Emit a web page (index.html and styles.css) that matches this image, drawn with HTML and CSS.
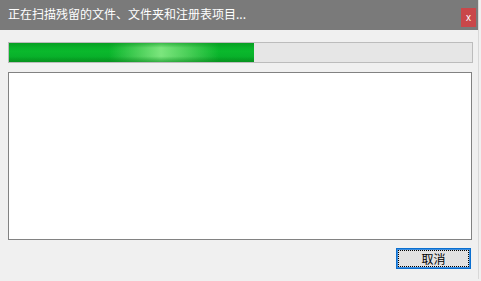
FILE: index.html
```html
<!DOCTYPE html>
<html>
<head>
<meta charset="utf-8">
<link rel="stylesheet" href="styles.css">
</head>
<body>
<div class="window">
  <div class="titlebar">
    <span class="title">正在扫描残留的文件、文件夹和注册表项目...</span>
    <span class="close">x</span>
  </div>
  <div class="content">
    <div class="progress"><div class="fill" style="width: 245px"></div></div>
    <div class="log"></div>
    <div class="actions">
      <button class="btn"><span class="focus">取消</span></button>
    </div>
  </div>
</div>
</body>
</html>
```

FILE: styles.css
```css
html, body {
  margin: 0;
  padding: 0;
  width: 481px;
  height: 281px;
  overflow: hidden;
  background: #f0f0f0;
  font-family: "Noto Sans CJK SC", "Noto Sans", sans-serif;
}
.window {
  width: 478px;
  height: 279px;
  background: #f0f0f0;
  border-right: 1px solid #d8d8d8;
  display: flex;
  flex-direction: column;
}
.titlebar {
  height: 30px;
  background: #7a7a7a;
  display: flex;
  align-items: center;
  justify-content: space-between;
  padding: 0 2px 0 8px;
}
.title {
  color: #ffffff;
  font-size: 12px;
  line-height: 14px;
  margin-top: -2px;
}
.close {
  width: 15px;
  height: 19px;
  margin-top: 5px;
  background: #c9474a;
  color: #ffffff;
  font-family: "Liberation Sans", sans-serif;
  font-size: 10px;
  display: flex;
  align-items: center;
  justify-content: center;
}
.content {
  flex: 1;
  display: flex;
  flex-direction: column;
  padding: 12px 6px 0 8px;
}
.progress {
  height: 19px;
  border: 1px solid #bcbcbc;
  background: #e6e6e6;
  width: 463px;
}
.fill {
  height: 100%;
  background:
    linear-gradient(to bottom, rgba(6, 150, 30, 0.55) 0%, rgba(6, 150, 30, 0) 25%, rgba(6, 150, 30, 0) 70%, rgba(6, 140, 30, 0.6) 100%),
    linear-gradient(to right, rgba(120, 225, 120, 0) 100px, rgba(120, 225, 120, 0.6) 130px, rgba(130, 232, 130, 0.95) 152px, rgba(120, 225, 120, 0.6) 178px, rgba(120, 225, 120, 0) 210px),
    linear-gradient(to bottom, #07ab26 0%, #0ab82c 45%, #08b02a 75%, #069e20 100%);
}
.log {
  margin-top: 9px;
  height: 166px;
  width: 462px;
  border: 1px solid #828282;
  background: #ffffff;
}
.actions {
  display: flex;
  justify-content: flex-end;
  padding-top: 8px;
  padding-right: 1px;
}
.btn {
  width: 75px;
  height: 21px;
  margin: 0;
  padding: 1px;
  border: 1px solid #0a6fd0;
  background: #e1e1e1;
  box-shadow: inset 0 0 0 1px #3c8ee0;
  font-family: "Noto Sans CJK SC", sans-serif;
  font-size: 12px;
  color: #000;
  display: flex;
}
.focus {
  flex: 1;
  border: 1px dotted #000;
  display: flex;
  align-items: center;
  justify-content: center;
  line-height: 14px;
}
```
